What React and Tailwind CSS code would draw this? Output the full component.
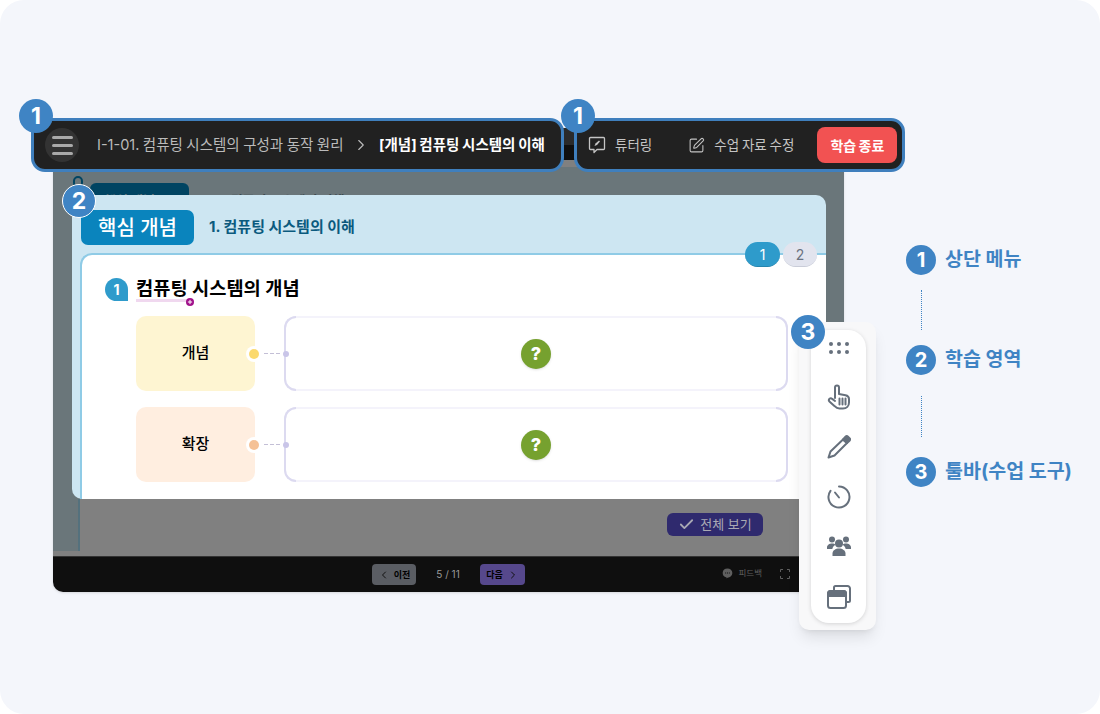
import React from 'react';
import { ChevronLeft, ChevronRight, SquarePen, Check, Plus } from 'lucide-react';

const FONT = { fontFamily: 'Inter, "Noto Sans CJK KR", sans-serif' };

// numbered annotation marker
const Marker = ({ n, className = '' }) => (
  <div className={`w-[34px] h-[34px] rounded-full bg-[#3f84c4] flex items-center justify-center text-white text-[23px] font-bold leading-none ${className}`}>
    {n}
  </div>
);

const TutorIcon = () => (
  <svg width="18" height="18" viewBox="0 0 18 18" fill="none" stroke="currentColor" strokeWidth="1.3" strokeLinejoin="round">
    <path d="M2.5 1.5h13a1 1 0 0 1 1 1v10a1 1 0 0 1-1 1H9l-3 3v-3H2.5a1 1 0 0 1-1-1v-10a1 1 0 0 1 1-1z" />
    <path d="M6.5 10l1-2.500 3.500-3 1 1-3 3.500z" fill="currentColor" stroke="none" />
  </svg>
);

const HandIcon = () => (
  <svg width="24" height="26" viewBox="0 0 24 26" fill="none" stroke="#66707c" strokeWidth="2" strokeLinecap="round" strokeLinejoin="round">
    <path d="M8 14V3.500a2 2 0 0 1 4 0V10l6.500 1.200c2 .4 3.500 1.600 3.500 3.800v3.500c0 3.500-2.500 6-6 6h-3.500c-2 0-3.500-.8-4.800-2.300L2.400 17.500c-1.600-2 1-4.200 2.800-2.600L8 17" />
    <path d="M12.500 14.500v6M15.500 14.500v6M18.500 14.500v6" strokeWidth="2" />
  </svg>
);

const PencilIcon = () => (
  <svg width="24" height="24" viewBox="0 0 24 24" fill="none" stroke="#66707c" strokeWidth="2" strokeLinejoin="round">
    <path d="M16 4.500L3.500 16.500 1.500 22.500l6-2L20 8z" />
    <path d="M16 4.500l2.500-2.800c.8-.8 1.700-.8 2.500 0l1.500 1.500c.8.8.8 1.700 0 2.500L20 8z" fill="#66707c" />
  </svg>
);

const TimerIcon = () => (
  <svg width="24" height="24" viewBox="0 0 24 24" fill="none" stroke="#66707c" strokeWidth="2" strokeLinecap="round">
    <path d="M12 1.500A10.500 10.500 0 1 1 3.500 5.800" />
    <path d="M12 12.500L8 7.500" />
  </svg>
);

const UsersIcon = () => (
  <svg width="24" height="20" viewBox="0 0 24 20" fill="#66707c">
    <circle cx="5" cy="3.500" r="3" />
    <circle cx="19" cy="3.500" r="3" />
    <path d="M0 13v-1.500C0 9 2.500 7.500 5 7.500c1.500 0 2.800.4 3.600 1.200-1.800 1-3 2.500-3.300 4.300z" />
    <path d="M24 13v-1.500c0-2.500-2.500-4-5-4-1.500 0-2.800.4-3.600 1.200 1.800 1 3 2.500 3.300 4.300z" />
    <circle cx="12" cy="7.500" r="4" />
    <path d="M5.500 20v-2.500c0-3 3-5 6.500-5s6.500 2 6.500 5V20z" />
  </svg>
);

const WindowIcon = () => (
  <svg width="24" height="24" viewBox="0 0 24 24" fill="none" stroke="#66707c" strokeWidth="2" strokeLinejoin="round">
    <path d="M7 5V2.500A1.500 1.500 0 0 1 8.500 1h12A2.500 2.500 0 0 1 23 3.500v12a1.500 1.500 0 0 1-1.500 1.500H19" />
    <rect x="1" y="6" width="18" height="17" rx="2.500" />
    <path d="M1 8.500A2.500 2.500 0 0 1 3.500 6h13A2.500 2.500 0 0 1 19 8.500V11H1z" fill="#66707c" />
  </svg>
);

const FeedbackIcon = () => (
  <svg width="11" height="11" viewBox="0 0 12 12" fill="#5f5f5f">
    <path d="M6 .5a5.300 5 0 0 1 0 10l-1 1v-1.100A5.300 5 0 0 1 6 .5z" />
    <path d="M3.500 5.500h5" stroke="#0f0f0f" strokeWidth="1.200" strokeDasharray="1 1" />
  </svg>
);

const FullscreenIcon = () => (
  <svg width="10" height="10" viewBox="0 0 10 10" fill="none" stroke="#5f5f5f" strokeWidth="1">
    <path d="M.5 3V.5H3M7 .5h2.500V3M9.500 7v2.500H7M3 9.500H.5V7" />
  </svg>
);

const ConceptRow = ({ label, boxColor, dotColor }) => (
  <div className="flex h-[75px]">
    <div className={`relative w-[119px] rounded-[10px] flex items-center justify-center text-[15px] font-medium text-black ${boxColor}`}>
      {label}
      <div className="absolute right-[-7px] top-[30px] w-4 h-4 rounded-full bg-white flex items-center justify-center">
        <div className={`w-[10px] h-[10px] rounded-full ${dotColor}`} />
      </div>
    </div>
    <div className="w-[29px] flex items-center pl-[9px] gap-[2px]">
      {[0, 1, 2].map((i) => (
        <div key={i} className="w-[4px] h-[1.5px] bg-[#c3bfd6]" />
      ))}
    </div>
    <div className="relative flex-1 rounded-[12px] border-2 border-[#f4f3fb] flex items-center justify-center">
      <div className="absolute -left-[2px] -top-[2px] -bottom-[2px] w-3 rounded-l-[12px] border-2 border-r-0 border-[#dcdaf0]" />
      <div className="absolute -right-[2px] -top-[2px] -bottom-[2px] w-3 rounded-r-[12px] border-2 border-l-0 border-[#dcdaf0]" />
      <div className="absolute -left-[3px] top-[33px] w-[6px] h-[6px] rounded-full bg-[#c9c5e8]" />
      <div className="w-[30px] h-[30px] rounded-full bg-[#76a12f] shadow-sm flex items-center justify-center text-white text-[18px] font-extrabold leading-none">?</div>
    </div>
  </div>
);

const LegendItem = ({ n, label }) => (
  <div className="flex items-center gap-[9px] h-[30px] whitespace-nowrap">
    <div className="w-[30px] h-[30px] rounded-full bg-[#3f84c4] flex items-center justify-center text-white text-[20px] font-bold leading-none">{n}</div>
    <span className="text-[19.5px] font-bold text-[#3f84c4]">{label}</span>
  </div>
);

const LegendLine = ({ className }) => (
  <div className={`ml-[15px] border-l border-dotted border-[#3f84c4] ${className}`} />
);

const App = () => {
  return (
    <div className="w-[1100px] h-[714px] bg-white overflow-hidden" style={FONT}>
      <div className="relative w-full h-full rounded-[24px] bg-[#f4f6fb] flex items-start pl-[53px] pt-[128px]">
        {/* dimmed lesson screen */}
        <div className="relative w-[791px] h-[464px] rounded-b-[10px] overflow-hidden flex flex-col shrink-0 shadow-sm">
          <div className="h-[17px] bg-[#2a2a2a] shrink-0" />
          <div className="h-[15px] bg-[#0f0f0f] shrink-0" />
          <div className="relative flex-1 flex flex-col bg-[#808080]">
            <div className="relative h-[339px] bg-[#6a767a] pt-[35px] pl-[19px] pr-[18px]">
              <div className="absolute left-0 right-0 top-0 h-[7px] bg-[#808080]" />
              <div className="absolute left-[20px] top-[16px] w-[10px] h-[12px] rounded-full border-2 border-[#004462]" />
              <div className="absolute left-[37px] top-[23px] w-[99px] h-8 rounded-md bg-[#004462] text-[#6a767a] text-[13px] font-bold pl-[14px] pt-2">핵심 개념</div>
              <div className="absolute left-[165px] top-[31px] text-[13px] font-bold text-[#3c4a50]">1. 컴퓨팅 시스템의 이해</div>

              {/* highlighted learning area */}
              <div className="relative h-[304px] rounded-t-[10px] rounded-bl-[10px] bg-[#cde6f2] flex flex-col">
                <div className="h-[58px] flex items-center pl-[9px] pt-[7px] gap-[15px] shrink-0">
                  <div className="w-[113px] h-[35px] rounded-[7px] bg-[#0a84bd] text-white text-[20px] font-medium flex items-center justify-center">핵심 개념</div>
                  <div className="text-[15px] font-bold text-[#0b5a7e]">1. 컴퓨팅 시스템의 이해</div>
                </div>
                <div className="relative flex-1 ml-[8px] rounded-tl-[12px] bg-white border-t-2 border-l-2 border-[#8fcbe6] pl-[23px] pr-[38px] pt-[22px]">
                  <div className="absolute right-[9px] -top-[13px] flex gap-[3px]">
                    <div className="w-[35px] h-[25px] rounded-full bg-[#2e9bcb] text-white text-[14px] flex items-center justify-center border-b border-[#2585ae]">1</div>
                    <div className="w-[34px] h-[25px] rounded-full bg-[#e2e4ee] text-[#6b7280] text-[14px] flex items-center justify-center border-b border-[#c9ccd8]">2</div>
                  </div>
                  <div className="flex items-center h-[24px] gap-2">
                    <div className="w-[23px] h-[23px] rounded-full rounded-br-none bg-[#2f9bcb] text-white text-[14px] font-bold flex items-center justify-center">1</div>
                    <div className="text-[18.7px] font-bold text-black leading-none pt-[1px]">
                      <span className="relative">
                        컴퓨팅
                        <span className="absolute left-0 right-0 -bottom-[2px] h-[3px] bg-[#f0d8ef]" />
                        <span className="absolute -right-[6px] -bottom-[6px] w-2 h-2 rounded-full bg-[#a0108a] flex items-center justify-center text-white">
                          <Plus size={6} strokeWidth={4} />
                        </span>
                      </span>
                      {' '}시스템의 개념
                    </div>
                  </div>
                  <div className="pl-[31px] mt-[15px] flex flex-col gap-[16px]">
                    <ConceptRow label="개념" boxColor="bg-[#fef5d2]" dotColor="bg-[#fbd96e]" />
                    <ConceptRow label="확장" boxColor="bg-[#ffeee0]" dotColor="bg-[#f5c196]" />
                  </div>
                </div>
              </div>
            </div>
            <div className="flex-1 flex">
              <div className="w-[27px] h-[52px] bg-[#6a767a] border-r-2 border-[#54717d]" />
              <div className="flex-1 flex justify-end pt-[14px] pr-[81px]">
                <div className="w-[96px] h-[23px] rounded-md bg-[#2f2a6e] text-[#a9a9b4] text-[13px] flex items-center justify-center gap-[5px]">
                  <Check size={17} strokeWidth={2.5} />
                  전체 보기
                </div>
              </div>
            </div>
          </div>
          <div className="relative h-[36px] bg-[#0f0f0f] shrink-0 border-t border-[#333] flex items-center justify-center gap-5 text-[#9a9a9a]">
            <div className="w-11 h-[21px] rounded bg-[#5a5d63] text-[9px] font-bold text-black flex items-center justify-center gap-1">
              <ChevronLeft size={12} className="text-[#111]" />
              이전
            </div>
            <div className="text-[10px] w-6 text-center whitespace-nowrap">5 / 11</div>
            <div className="w-[45px] h-[21px] rounded bg-[#56488c] text-[9px] font-bold text-black flex items-center justify-center gap-1">
              다음
              <ChevronRight size={12} className="text-[#111]" />
            </div>
            <div className="absolute right-[82px] top-[10px] flex items-center gap-[6px] text-[#5f5f5f] text-[8.5px]">
              <FeedbackIcon />
              피드백
            </div>
            <div className="absolute right-[54px] top-[12px]">
              <FullscreenIcon />
            </div>
          </div>
        </div>

        {/* legend */}
        <div className="ml-[62px] mt-[117px] flex flex-col">
          <LegendItem n="1" label="상단 메뉴" />
          <LegendLine className="h-[40px] mt-[15px] mb-[15px]" />
          <LegendItem n="2" label="학습 영역" />
          <LegendLine className="h-[41px] mt-[21px] mb-[20px]" />
          <LegendItem n="3" label="툴바(수업 도구)" />
        </div>

        {/* top menu callouts */}
        <div className="absolute left-[31px] top-[118px] w-[533px] h-[54px] rounded-[14px] border-[3px] border-[#3f7fbd] bg-[#212121] flex items-center pl-[11px] whitespace-nowrap">
          <div className="w-[34px] h-[34px] rounded-full bg-[#333333] flex flex-col items-center justify-center gap-[5px]">
            <div className="w-[21px] h-[3px] bg-[#aaaaaa] rounded-full" />
            <div className="w-[21px] h-[3px] bg-[#aaaaaa] rounded-full" />
            <div className="w-[21px] h-[3px] bg-[#aaaaaa] rounded-full" />
          </div>
          <div className="ml-[18px] w-[246px] text-[14.5px] text-[#bbbbbb] [word-spacing:-0.6px]">I-1-01. 컴퓨팅 시스템의 구성과 동작 원리</div>
          <ChevronRight size={18} strokeWidth={1.5} className="ml-[9px] text-[#bbbbbb]" />
          <div className="ml-[9px] text-[14.5px] font-bold text-white [word-spacing:-0.7px]">[개념] 컴퓨팅 시스템의 이해</div>
        </div>
        <div className="absolute left-[574px] top-[118px] w-[331px] h-[54px] rounded-[14px] border-[3px] border-[#3f7fbd] bg-[#212121] flex items-center pl-[11px] whitespace-nowrap text-[13.5px] text-[#c4c4c4] [word-spacing:-1px]">
          <TutorIcon />
          <span className="ml-[9px]">튜터링</span>
          <SquarePen size={17} strokeWidth={1.5} className="ml-9" />
          <span className="ml-[9px]">수업 자료 수정</span>
          <div className="ml-[23px] w-20 h-9 rounded-lg bg-[#f25252] text-white text-[14px] font-bold flex items-center justify-center">학습 종료</div>
        </div>

        {/* toolbar */}
        <div className="absolute left-[799px] top-[322px] w-[77px] h-[308px] rounded-[10px] bg-[#f8f8f9] shadow-lg pl-3 pt-2">
          <div className="w-[55px] h-[293px] rounded-[18px] bg-white shadow-[0_1px_4px_rgba(0,0,0,0.15)] flex flex-col items-center pt-3">
            <div className="grid grid-cols-3 gap-[4px]">
              {[0, 1, 2, 3, 4, 5].map((i) => (
                <div key={i} className="w-[4px] h-[4px] rounded-full bg-[#66707c]" />
              ))}
            </div>
            <div className="mt-[30px]"><HandIcon /></div>
            <div className="mt-[25px]"><PencilIcon /></div>
            <div className="mt-[26px]"><TimerIcon /></div>
            <div className="mt-[27px]"><UsersIcon /></div>
            <div className="mt-[29px]"><WindowIcon /></div>
          </div>
        </div>

        <Marker n="1" className="absolute left-[19px] top-[99px]" />
        <Marker n="1" className="absolute left-[561px] top-[99px]" />
        <Marker n="2" className="absolute left-[62px] top-[184px] border border-white" />
        <Marker n="3" className="absolute left-[791px] top-[315px]" />
      </div>
    </div>
  );
};

export default App;
